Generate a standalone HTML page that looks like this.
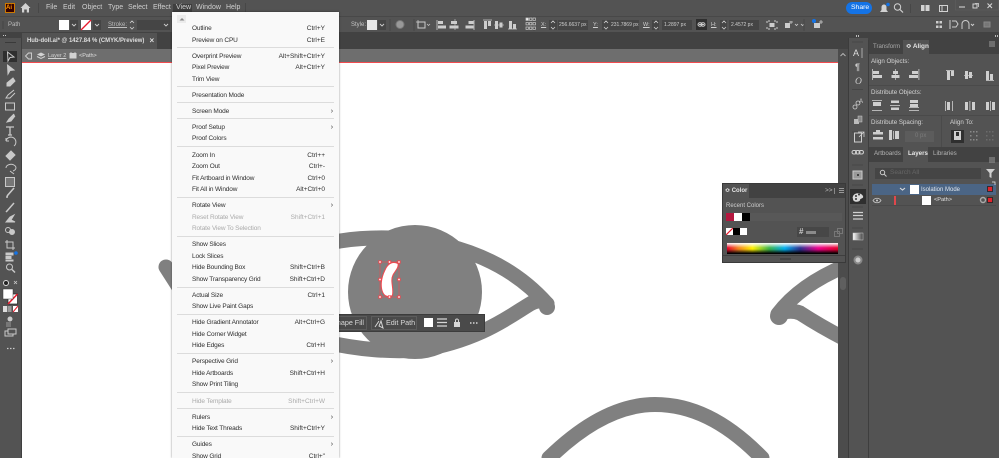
<!DOCTYPE html>
<html><head><meta charset="utf-8"><title>Illustrator View menu</title>
<style>
html,body{margin:0;padding:0;background:#535353}
body{position:relative;width:999px;height:458px;overflow:hidden;font-family:"Liberation Sans",sans-serif}
div,span,svg{position:absolute}
.t{white-space:nowrap;line-height:12px;height:12px;font-size:6.6px;color:#cfcfcf}
#menu{left:172px;top:12px;width:167px;height:446px;background:#f9f9f9;box-shadow:0 0 2px rgba(0,0,0,.45);overflow:hidden}
.m{left:20px;margin-top:1px;white-space:nowrap;font-size:6.5px;letter-spacing:-.14px;line-height:12px;height:12px;color:#2e2e2e;width:133px}
.m b{position:absolute;right:0;top:0;font-weight:normal;letter-spacing:0}
.m i{position:absolute;right:-8px;top:0;font-style:normal;font-size:7px}
.m.d{color:#aaa}
.s{left:5px;width:157px;height:1px;background:#dcdcdc}
.f{background:#454545}
</style></head><body>

<!-- bars -->
<div style="left:0;top:0;width:999px;height:16px;background:#535353"></div>
<div style="left:0;top:16px;width:999px;height:17px;background:#535353;border-top:1px solid #484848;box-sizing:border-box;border-bottom:1px solid #424242"></div>
<div style="left:0;top:33px;width:848px;height:16px;background:#424242"></div>
<div style="left:22px;top:33px;width:135px;height:16px;background:#535353"></div>
<div style="left:22px;top:49px;width:826px;height:13px;background:#6e6e6e"></div>
<div style="left:22px;top:62px;width:816px;height:1.5px;background:#f14b4f"></div>

<!-- canvas -->
<div style="left:22px;top:63px;width:816px;height:395px;background:#fff"></div>
<svg style="left:0;top:0" width="999" height="458" fill="none" stroke="#808080" stroke-width="15" stroke-linecap="round" stroke-linejoin="round">
<path d="M166 267L182 292"/>
<path d="M300 246Q320 243 340 241C400 232 490 240 547 304"/>
<path d="M547 304Q540 298 530 304C510 316 480 340 420 350C390 352 360 350 320 341"/>
<circle cx="415" cy="292" r="67" fill="#808080" stroke="none"/>
<path d="M845 266Q800 285 778 314Q790 309 800 313Q820 326 845 339"/>
<circle cx="547" cy="307" r="8" fill="#808080" stroke="none"/>
<circle cx="779" cy="316" r="9" fill="#808080" stroke="none"/>
<path d="M549 458C590 418 625 404.500 655 404.500C690 404.500 725 420 762 458"/>
</svg>

<!-- selected shape -->
<svg style="left:0;top:0" width="999" height="458">
<path d="M398 263.500C393 261 388 263 385 270C381 278 380 287 383 293C385 297 391 298 392.500 295C394 288 390 281 393 275C395 271 399 268 398 263.500Z" fill="#fff" stroke="#f0484f" stroke-width="1"/>
<rect x="380" y="262" width="19" height="35" fill="none" stroke="#f0484f" stroke-width=".6"/>
<g fill="#fff" stroke="#f0484f" stroke-width=".9">
<rect x="378.800" y="260.800" width="2.400" height="2.400"/><rect x="388.300" y="260.800" width="2.400" height="2.400"/><rect x="397.800" y="260.800" width="2.400" height="2.400"/>
<rect x="378.800" y="278.300" width="2.400" height="2.400"/><rect x="397.800" y="278.300" width="2.400" height="2.400"/>
<rect x="378.800" y="295.800" width="2.400" height="2.400"/><rect x="388.300" y="295.800" width="2.400" height="2.400"/><rect x="397.800" y="295.800" width="2.400" height="2.400"/>
</g></svg>

<!-- contextual bar -->
<div style="left:330px;top:314px;width:155px;height:18px;background:#4a4a4a;border:1px solid #3c3c3c;box-sizing:border-box"></div>
<div style="left:330px;top:316px;width:37px;height:14px;border:1px solid #5c5c5c;box-sizing:border-box"></div>
<div style="left:371px;top:316px;width:46px;height:14px;border:1px solid #5c5c5c;box-sizing:border-box"></div>
<span class="t" style="left:339px;top:317px;width:25px;overflow:hidden;direction:rtl;font-size:7.200px;color:#d8d8d8">Shape Fill</span>
<span class="t" style="left:386px;top:317px;font-size:7.200px;color:#d8d8d8">Edit Path</span>
<div style="left:424px;top:318px;width:9px;height:9px;background:#fff"></div>
<svg style="left:0;top:0" width="999" height="458" fill="none" stroke="#d6d6d6">
<path d="M375 327L379 321M381 321L383 328L379 326Z M378 319h1M382 319h1" stroke-width="1"/>
<path d="M437 319h10M437 322.500h10M437 326h10" stroke-width="1.300"/>
<path d="M455.500 322v-1.500a1.500 1.500 0 0 1 3 0V322" stroke-width="1"/><rect x="454" y="322" width="6" height="5" fill="#d6d6d6" stroke="none"/>
<path d="M470 323h1.500M473 323h1.500M476 323h1.500" stroke-width="1.500"/>
</svg>

<!-- left toolbar -->
<div style="left:0;top:33px;width:21px;height:425px;background:#535353;border-right:1px solid #3f3f3f"></div>
<div style="left:0;top:33px;width:22px;height:5px;background:#424242"></div>
<div style="left:5px;top:42px;width:11px;height:1px;background:#3a3a3a"></div>
<div style="left:3px;top:51px;width:14px;height:11px;background:#2f2f2f"></div>
<svg style="left:0;top:0" width="22" height="458" fill="#c9c9c9" stroke="#c9c9c9" stroke-width="1">
<path d="M3 35.500h1M5 35.500h1" stroke-width="1"/>
<path d="M7.500 52L14 57L10 57.500L8 61Z" fill="none"/>
<path d="M7.500 65L14 70L10 70.500L8 74Z"/>
<path d="M13 78L7 83L7 86L10 86L15 81Z"/>
<path d="M14 90L8 95L6 98L10 98L15 93" fill="none"/>
<rect x="5.500" y="103" width="9" height="7" fill="none"/>
<path d="M14 114L9 119L7 122L11 121L15 116"/>
<path d="M6 127h8M10 127v8M8 135h4" fill="none" stroke-width="1.300"/>
<path d="M14 146A5 5 0 1 0 6 141L6 138M6 141L9 141" fill="none"/>
<path d="M11 151L15 155L10 160L6 156Z"/>
<path d="M6 168a5 3.500 0 1 1 7 3M10 171L14 174" fill="none"/>
<rect x="5.500" y="177.500" width="9" height="9" fill="#777"/>
<path d="M14 188L7 196M6 197L8 197" fill="none" stroke-width="1.600"/>
<path d="M14 203L7 211L6 212" fill="none" stroke-width="1.500"/>
<path d="M6 222L10 217L14 215L11 220L15 222Z"/>
<circle cx="8" cy="230" r="2.500" fill="none"/><circle cx="12" cy="232" r="2.500"/>
<path d="M7 240V248H15M5 242H13V250" fill="none"/>
<rect x="6" y="253" width="7" height="2"/><rect x="6" y="256.500" width="5" height="2"/><rect x="6" y="260" width="7" height="1"/>
<circle cx="9.500" cy="267" r="3" fill="none"/><path d="M12 269.500L15 272.500" stroke-width="1.500"/>
<path d="M14 281L17 284M14 284l3-3" stroke-width=".8"/>
<circle cx="6" cy="283" r="2.500" fill="#222" stroke="#ddd"/>
<rect x="6" y="322" width="5" height="5" fill="#777" stroke="none"/><circle cx="10" cy="319" r="2.500" stroke="none"/>
<rect x="5" y="331" width="8" height="5" fill="none"/><rect x="8" y="329" width="8" height="5" fill="#535353"/>
<path d="M7 348.500h1.500M10 348.500h1.500M13 348.500h1.500" stroke-width="1.200"/>
</svg>
<svg style="left:0;top:0" width="22" height="458">
<circle cx="16" cy="253" r="1.800" fill="#1473e6"/>
<rect x="8" y="294" width="9.500" height="10" fill="#fff" stroke="#222" stroke-width=".7"/>
<path d="M8 304L17.500 294" stroke="#e8192c" stroke-width="1.500"/>
<rect x="3" y="289" width="10" height="10" fill="#fff" stroke="#3b3b3b" stroke-width=".5"/>
<rect x="3" y="306" width="4" height="6" fill="#ddd"/><rect x="7.500" y="306" width="4" height="6" fill="#999"/>
<rect x="13" y="306" width="5" height="6" fill="#fff"/><path d="M13 312L18 306" stroke="#e8192c"/>
</svg>

<!-- menu bar -->
<div style="left:5px;top:3px;width:10px;height:10px;background:#330000;border:.7px solid #cc7a00;box-sizing:border-box"></div>
<span class="t" style="left:6px;top:2px;font-size:6px;font-weight:bold;color:#ff9a00">Ai</span>
<svg style="left:0;top:0" width="60" height="16" fill="#d2d2d2"><path d="M25.500 3L30.500 8H29V12.500H26.800V9.500H24.200V12.500H22V8H20.500Z"/><rect x="38" y="3" width="1" height="10" fill="#474747"/></svg>
<div style="left:173px;top:4px;width:19px;height:12px;background:#3f3f3f"></div>
<span class="t" style="left:46px;top:2px;font-size:7px">File</span>
<span class="t" style="left:63px;top:2px;font-size:7px">Edit</span>
<span class="t" style="left:82px;top:2px;font-size:7px">Object</span>
<span class="t" style="left:108px;top:2px;font-size:7px">Type</span>
<span class="t" style="left:128px;top:2px;font-size:7px">Select</span>
<span class="t" style="left:153px;top:2px;font-size:7px">Effect</span>
<span class="t" style="left:176px;top:2px;font-size:7px">View</span>
<span class="t" style="left:196px;top:2px;font-size:7px">Window</span>
<span class="t" style="left:226px;top:2px;font-size:7px">Help</span>
<div style="left:245px;top:3px;width:1px;height:10px;background:#474747"></div>

<!-- share / top right -->
<div style="left:846px;top:2px;width:26px;height:12px;border-radius:6px;background:#1473e6"></div>
<span class="t" style="left:851px;top:2px;font-size:6.800px;color:#fff">Share</span>
<svg style="left:870px;top:0" width="129" height="16" fill="none" stroke="#d2d2d2">
<path d="M10 12L11.500 10V7A2.500 2.500 0 0 1 16.500 7V10L18 12Z" fill="#d2d2d2" stroke="none"/>
<circle cx="18" cy="4.500" r="1.800" fill="#1473e6" stroke="none"/>
<circle cx="27.500" cy="7" r="3.200"/><path d="M30 9.500L33 12.500" stroke-width="1.200"/>
<path d="M40.500 4v9" stroke="#474747"/>
<rect x="51" y="5" width="8.500" height="6" fill="#d2d2d2" stroke="none"/><path d="M55 5v6" stroke="#535353"/>
<rect x="69.500" y="5.500" width="8" height="6"/><path d="M72 5.500v6"/>
<rect x="85.500" y="-1" width="43" height="11" stroke="#5f5f5f" stroke-width=".7"/>
<path d="M89 7h6" stroke-width="1.100"/><rect x="103" y="4" width="4" height="4"/><path d="M105 3.500h3.500v3.500" stroke-width=".8"/>
<path d="M117.500 3.500l4.500 4.500M122 3.500l-4.500 4.500" stroke-width="1.100"/>
</svg>

<!-- control bar -->
<span class="t" style="left:8px;top:19px;font-size:6px;color:#bdbdbd">Path</span>
<div style="left:59px;top:20px;width:9.500px;height:9.500px;background:#fff"></div>
<div class="f" style="left:70px;top:20px;width:8px;height:10px"></div>
<div style="left:81px;top:20px;width:10px;height:10px;background:#fff"></div>
<div class="f" style="left:93px;top:20px;width:8px;height:10px"></div>
<span class="t" style="left:108px;top:19px;font-size:6px;text-decoration:underline;color:#bdbdbd">Stroke:</span>
<div class="f" style="left:137px;top:20px;width:33px;height:10px"></div>
<span class="t" style="left:351px;top:19px;font-size:6px;color:#c4c4c4">Style:</span>
<div style="left:367px;top:20px;width:10px;height:10px;background:#e6e6e6"></div>
<div class="f" style="left:378px;top:20px;width:8px;height:10px"></div>
<span class="t" style="left:541px;top:19px;font-size:5.500px;text-decoration:underline">X:</span>
<div class="f" style="left:549px;top:20px;width:8px;height:10px"></div>
<div class="f" style="left:558px;top:20px;width:30px;height:10px"></div>
<span class="t" style="left:559px;top:19px;font-size:5px">256.6637 px</span>
<span class="t" style="left:593px;top:19px;font-size:5.500px;text-decoration:underline">Y:</span>
<div class="f" style="left:602px;top:20px;width:8px;height:10px"></div>
<div class="f" style="left:610px;top:20px;width:29px;height:10px"></div>
<span class="t" style="left:611px;top:19px;font-size:5px">231.7869 px</span>
<span class="t" style="left:643px;top:19px;font-size:5.500px;text-decoration:underline">W:</span>
<div class="f" style="left:652px;top:20px;width:7px;height:10px"></div>
<div class="f" style="left:662px;top:20px;width:30px;height:10px"></div>
<span class="t" style="left:664px;top:19px;font-size:5px">1.2897 px</span>
<div style="left:696px;top:19px;width:11px;height:11px;background:#2f2f2f"></div>
<span class="t" style="left:711px;top:19px;font-size:5.500px;text-decoration:underline">H:</span>
<div class="f" style="left:720px;top:20px;width:7px;height:10px"></div>
<div class="f" style="left:729px;top:20px;width:30px;height:10px"></div>
<span class="t" style="left:731px;top:19px;font-size:5px">2.4572 px</span>
<svg style="left:0;top:0" width="999" height="33" fill="none" stroke="#cdcdcd" stroke-width="1">
<path d="M3 21v8" stroke="#444"/>
<path d="M72 24l2 2 2-2M95 24l2 2 2-2M164 24l2 2 2-2M380 24l2 2 2-2" stroke-width=".9"/>
<path d="M81 30L91 20" stroke="#e8192c" stroke-width="1.300"/>
<path d="M130 23l2-2 2 2M130 27l2 2 2-2M551 23l2-2 2 2M551 27l2 2 2-2M604 23l2-2 2 2M604 27l2 2 2-2M654 23l2-2 2 2M654 27l2 2 2-2M722 23l2-2 2 2M722 27l2 2 2-2" stroke-width=".8"/>
<path d="M390 19v12M414 19v12M534 19v12" stroke="#474747"/>
<circle cx="400" cy="24.500" r="4" fill="#999" stroke="#777"/>
<rect x="418" y="22" width="7" height="6"/><path d="M416 22h9M418 20v8M427 24l1.500 1.500 1.500-1.500" stroke-width=".7"/>
<!-- align -->
<path d="M437 20v10M474 20v10M483 20h9M508 29h9" stroke-width=".8"/>
<g fill="#cdcdcd" stroke="none"><rect x="438" y="21" width="5" height="3"/><rect x="438" y="25.500" width="8" height="3"/><rect x="451" y="21" width="6" height="3"/><rect x="449.500" y="25.500" width="9" height="3"/><rect x="468.500" y="21" width="5" height="3"/><rect x="465.500" y="25.500" width="8" height="3"/>
<rect x="484" y="21" width="3" height="8"/><rect x="488" y="21" width="3" height="5"/><rect x="495" y="21" width="3" height="8"/><rect x="499.500" y="22.500" width="3" height="5"/><rect x="509" y="21" width="3" height="8"/><rect x="513" y="24" width="3" height="5"/></g>
<path d="M455 19v11" stroke-width=".6"/><path d="M494 25h10" stroke-width=".6"/>
<!-- ref point -->
<g stroke-width=".7"><rect x="526" y="18" width="2.400" height="2.400" fill="#eee"/><rect x="529.500" y="18" width="2.400" height="2.400"/><rect x="533" y="18" width="2.400" height="2.400"/><rect x="526" y="22.500" width="2.400" height="2.400"/><rect x="529.500" y="22.500" width="2.400" height="2.400"/><rect x="533" y="22.500" width="2.400" height="2.400"/><rect x="526" y="27" width="2.400" height="2.400"/><rect x="529.500" y="27" width="2.400" height="2.400"/><rect x="533" y="27" width="2.400" height="2.400"/></g>
<!-- link -->
<path d="M699 24.500h5" stroke-width="1"/><rect x="698" y="22.800" width="4" height="3.400" rx="1.700"/><rect x="701" y="22.800" width="4" height="3.400" rx="1.700"/>
<path d="M768 21h2M774 21h2M768 29h2M774 29h2M767 21v2M777 21v2M767 27v2M777 27v2"/><rect x="769.500" y="23" width="5" height="4" fill="#cdcdcd" stroke="none"/>
<rect x="785" y="23" width="5" height="5" fill="#cdcdcd" stroke="none"/><path d="M791 21v3M789 22h4M795 24l1.500 1.500 1.500-1.500M801 24l1.500 1.500 1.500-1.500" stroke-width=".8"/>
<path d="M804 19v12" stroke="#474747"/>
<rect x="814" y="23" width="6" height="5" fill="#cdcdcd" stroke="none"/><circle cx="814" cy="21" r="2" fill="#1473e6" stroke="none"/><path d="M821 20v4M819 22h4" stroke-width=".8"/>
<g fill="#cdcdcd" stroke="none"><rect x="936" y="21" width="2.500" height="2.500"/><rect x="939.500" y="21" width="2.500" height="2.500"/><rect x="936" y="25.500" width="2.500" height="2.500"/><rect x="939.500" y="25.500" width="2.500" height="2.500"/></g>
<path d="M950 20v9M952 21h4l2 3-2 3h-4"/><path d="M962 29v-5a3.500 3.500 0 0 1 7 0v5M971 24l1.500 1.500 1.500-1.500"/>
<rect x="984" y="22" width="6" height="5" fill="#777" stroke="#888"/>
</svg>

<!-- tab text, breadcrumb -->
<span class="t" style="left:27px;top:35px;font-size:5.930px;font-weight:bold;color:#dedede">Hub-doll.ai* @ 1427.84 % (CMYK/Preview)</span>
<span class="t" style="left:149.500px;top:35px;font-size:8px;font-weight:bold;color:#ddd">×</span>
<span class="t" style="left:48px;top:50px;font-size:5.500px;text-decoration:underline;color:#d2d2d2">Layer 2</span>
<span class="t" style="left:79px;top:50px;font-size:5.500px;color:#e0e0e0">&lt;Path&gt;</span>
<svg style="left:0;top:0" width="100" height="62" fill="none" stroke="#d2d2d2">
<path d="M31.500 53v6h-3l-3-3 3-3Z" stroke-width=".9"/>
<path d="M41 52.500l4 2-4 2-4-2Z" fill="#d2d2d2" stroke="none"/><path d="M37 56.500l4 2 4-2" stroke-width="1"/>
<rect x="69.500" y="53" width="7" height="5.500" fill="#d2d2d2" stroke="none"/><path d="M71 53v-1M75 53v-1" stroke-width=".8"/>
</svg>

<!-- scrollbar + strip + right panel -->
<div style="left:838px;top:49px;width:10px;height:409px;background:#4c4c4c"></div>
<div style="left:840px;top:277px;width:6px;height:13px;border-radius:3px;background:#5f5f5f"></div>
<svg style="left:838px;top:50px" width="10" height="10" fill="none" stroke="#bbb"><path d="M2.500 6l2.500-2.500 2.500 2.500" stroke-width=".9"/></svg>
<div style="left:848px;top:33px;width:151px;height:425px;background:#424242"></div>
<div style="left:848px;top:38px;width:20px;height:420px;background:#535353;border-left:1px solid #3c3c3c;box-sizing:border-box"></div>
<div style="left:868px;top:40px;width:131px;height:418px;background:#535353;border-left:1px solid #3e3e3e;box-sizing:border-box"></div>
<div style="left:869px;top:40px;width:130px;height:14px;background:#424242"></div>
<div style="left:903px;top:40px;width:26px;height:14px;background:#535353"></div>
<div style="left:869px;top:147px;width:130px;height:15px;background:#424242"></div>
<div style="left:903px;top:147px;width:25px;height:15px;background:#535353"></div>
<span class="t" style="left:873px;top:41px;font-size:6px;color:#aaa">Transform</span>
<span class="t" style="left:906px;top:41px;font-size:6.400px;font-weight:bold;color:#e4e4e4">≎ Align</span>
<span class="t" style="left:871px;top:56px;font-size:6.200px;color:#d4d4d4">Align Objects:</span>
<span class="t" style="left:871px;top:87px;font-size:6.200px;color:#d4d4d4">Distribute Objects:</span>
<span class="t" style="left:871px;top:117px;font-size:6.200px;color:#d4d4d4">Distribute Spacing:</span>
<span class="t" style="left:950px;top:117px;font-size:6.200px;color:#d4d4d4">Align To:</span>
<div style="left:869px;top:85px;width:130px;height:1px;background:#4a4a4a"></div>
<div style="left:869px;top:115px;width:130px;height:1px;background:#4a4a4a"></div>
<div style="left:941px;top:116px;width:1px;height:31px;background:#4a4a4a"></div>
<div style="left:905px;top:131px;width:29px;height:11px;background:#5c5c5c"></div>
<span class="t" style="left:915px;top:130px;font-size:6px;color:#7c7c7c">0 px</span>
<div style="left:951px;top:130px;width:13px;height:13px;background:#2f2f2f"></div>
<span class="t" style="left:874px;top:148px;font-size:6.200px;color:#b4b4b4">Artboards</span>
<span class="t" style="left:908px;top:148px;font-size:6.200px;font-weight:bold;color:#e6e6e6">Layers</span>
<span class="t" style="left:933px;top:148px;font-size:6.200px;color:#b4b4b4">Libraries</span>
<div style="left:875px;top:168px;width:106px;height:11px;background:#454545"></div>
<span class="t" style="left:890px;top:167px;font-size:6.500px;color:#666">Search All</span>
<div style="left:872px;top:184px;width:124px;height:10.500px;background:#4b6585"></div>
<span class="t" style="left:921px;top:183.500px;font-size:6px;color:#dfe6ee">Isolation Mode</span>
<div style="left:910px;top:184.500px;width:9px;height:9px;background:#fff"></div>
<div style="left:922px;top:196px;width:9px;height:9px;background:#fff"></div>
<div style="left:894px;top:195.500px;width:2px;height:9px;background:#e0474c"></div>
<span class="t" style="left:934px;top:194px;font-size:5.600px;color:#e2e2e2">&lt;Path&gt;</span>
<div style="left:872px;top:205px;width:124px;height:1px;background:#4a4a4a"></div>
<svg style="left:848px;top:33px" width="151" height="240" fill="none" stroke="#d0d0d0" stroke-width="1">
<!-- panel grips -->
<g fill="#bbb" stroke="none"><rect x="8" y="2" width="1" height="2"/><rect x="10" y="2" width="1" height="2"/><rect x="149" y="2" width="1" height="2"/><rect x="147" y="2" width="1" height="2"/></g>
<path d="M4 9h11M4 56.500h11M4 99h11M4 118h11M4 132h11M4 152h11M4 174h11M4 195h11M4 216h11" stroke="#474747"/>
<!-- menu icon -->
<path d="M141 9h6M141 11h6M141 13h6M141 125h6M141 127h6M141 129h6" stroke="#999"/>
<!-- strip -->
<path d="M14 15v10" stroke-width=".7"/>
<rect x="6.500" y="100" width="7" height="9"/><path d="M10 99h6v5M16 99l-5 5" stroke-width=".8"/>
<rect x="4" y="117.500" width="4.500" height="3.500" rx="1.700"/><rect x="7.500" y="117.500" width="4.500" height="3.500" rx="1.700"/><rect x="11" y="117.500" width="4.500" height="3.500" rx="1.700"/>
<rect x="5" y="138" width="9" height="8" fill="#999" stroke="#ccc"/><rect x="9" y="141" width="2" height="2" fill="#444" stroke="none"/>
<path d="M5 179.500h10M5 182.500h10M5 186h10" stroke-width="1.300"/>
<defs><linearGradient id="gg"><stop offset="0" stop-color="#fff"/><stop offset="1" stop-color="#444"/></linearGradient></defs>
<rect x="5" y="200" width="10" height="7" fill="url(#gg)" stroke="#ccc" stroke-width=".5"/>
<circle cx="10" cy="227" r="3.500" fill="#ccc" stroke="#888" stroke-width="2"/>
<circle cx="7" cy="74" r="2" stroke-width=".8"/><circle cx="10" cy="70" r="2" stroke-width=".8"/>
<rect x="6" y="86" width="5" height="5" fill="#bbb" stroke="none"/><rect x="10" y="83" width="4" height="6" fill="#888" stroke="#ccc" stroke-width=".5"/>
</svg>
<span class="t" style="left:853px;top:47px;font-size:9px;color:#ddd">A</span>
<span class="t" style="left:855px;top:61px;font-size:9px;font-weight:bold;color:#ccc">¶</span>
<span class="t" style="left:855px;top:76px;font-size:9.500px;font-family:'Liberation Serif',serif;font-style:italic;color:#ccc">O</span>
<span class="t" style="left:859px;top:96px;font-size:6px;color:#ccc">A</span>
<div style="left:850px;top:189px;width:16px;height:15px;background:#2f2f2f"></div>
<svg style="left:851px;top:190px" width="14" height="13"><path d="M2 9a5 4 0 0 1 10-3c1 3-3 2-3 4s-7 3-7-1Z" fill="#d8d8d8"/><circle cx="5" cy="6" r="1" fill="#333"/><circle cx="8" cy="4.500" r="1" fill="#333"/><circle cx="5" cy="9" r="1" fill="#333"/></svg>

<!-- align panel icons -->
<svg style="left:868px;top:60px" width="131" height="145" fill="#cfcfcf" stroke="none">
<g><rect x="5" y="11" width="6" height="3"/><rect x="5" y="15" width="9" height="3"/><rect x="4" y="9" width=".8" height="11"/>
<rect x="25" y="11" width="5" height="3"/><rect x="23.500" y="15" width="8" height="3"/><rect x="27" y="9" width=".7" height="11"/>
<rect x="44" y="11" width="6" height="3"/><rect x="41" y="15" width="9" height="3"/><rect x="50.500" y="9" width=".8" height="11"/>
<rect x="78" y="10" width="8" height=".8"/><rect x="79" y="11" width="3" height="9"/><rect x="83" y="11" width="3" height="5"/>
<rect x="97" y="11" width="3" height="8"/><rect x="101" y="12" width="3" height="6"/><rect x="96" y="15" width="9" height=".7"/>
<rect x="118" y="20" width="8" height=".8"/><rect x="118" y="11" width="3" height="9"/><rect x="122" y="14" width="3" height="6"/></g>
<g fill="#cfcfcf"><rect x="4" y="40" width="10" height=".8"/><rect x="5" y="42" width="8" height="4"/><rect x="4" y="50" width="10" height=".8"/>
<rect x="23" y="40.500" width="8" height="2.500"/><rect x="22" y="45" width="10" height=".8"/><rect x="23" y="47.500" width="8" height="2.500"/>
<rect x="42" y="40" width="8" height="3"/><rect x="41" y="47" width="10" height=".8"/><rect x="42" y="44" width="8" height="3"/><rect x="41" y="50" width="10" height=".8"/>
<rect x="77" y="41" width=".8" height="10"/><rect x="79" y="42" width="3" height="8"/><rect x="84" y="41" width=".8" height="10"/>
<rect x="97" y="42" width="3" height="8"/><rect x="101.500" y="41" width=".8" height="10"/><rect x="104" y="42" width="3" height="8"/>
<rect x="118" y="42" width="3" height="8"/><rect x="122" y="41" width=".8" height="10"/><rect x="124" y="42" width="3" height="8"/>
<rect x="5" y="72" width="10" height="2.500"/><rect x="8" y="70" width="4" height="2"/><rect x="5" y="77" width="10" height="2.500"/>
<rect x="21" y="70" width="3" height="10"/><rect x="25" y="71" width=".8" height="8"/><rect x="27" y="71" width="4" height="8"/>
<rect x="86" y="71" width="7" height="9"/><rect x="88" y="72" width="3" height="4" fill="#2f2f2f"/></g>
<g fill="#8a8a8a"><rect x="102" y="71" width="1.500" height="1.500"/><rect x="105" y="71" width="1.500" height="1.500"/><rect x="108" y="71" width="1.500" height="1.500"/><rect x="102" y="75" width="1.500" height="1.500"/><rect x="108" y="75" width="1.500" height="1.500"/><rect x="102" y="79" width="1.500" height="1.500"/><rect x="105" y="79" width="1.500" height="1.500"/><rect x="108" y="79" width="1.500" height="1.500"/></g>
<g fill="#6b6b6b"><rect x="118" y="71" width="1.500" height="1.500"/><rect x="121" y="71" width="1.500" height="1.500"/><rect x="124" y="71" width="1.500" height="1.500"/><rect x="118" y="75" width="1.500" height="1.500"/><rect x="124" y="75" width="1.500" height="1.500"/><rect x="118" y="79" width="1.500" height="1.500"/><rect x="121" y="79" width="1.500" height="1.500"/><rect x="124" y="79" width="1.500" height="1.500"/></g>
<!-- search/funnel etc. -->
<circle cx="14.500" cy="112.500" r="2.200" fill="none" stroke="#ccc"/><path d="M16 114l2.500 2.500" stroke="#ccc"/>
<path d="M118 109h9l-3.500 4v5l-2 -1v-4Z"/>
<path d="M32 128l2.500 2 2.500-2" fill="none" stroke="#ddd" stroke-width="1.100"/>
<path d="M124 122h3v3" fill="none" stroke="#eee" stroke-width=".7"/>
<path d="M5 140.500c2-3 6-3 8 0c-2 3-6 3-8 0Z" fill="none" stroke="#ccc" stroke-width=".8"/><circle cx="9" cy="140.500" r="1"/>
<rect x="119.500" y="126.500" width="5" height="5" fill="#e0242d" stroke="#222" stroke-width=".8"/>
<circle cx="115" cy="140" r="2.500" fill="none" stroke="#aaa" stroke-width="1.400"/>
<rect x="119.500" y="137.500" width="5" height="5" fill="#e0242d" stroke="#222" stroke-width=".8"/>
</svg>

<!-- color panel -->
<div style="left:722px;top:183px;width:124px;height:80px;background:#535353;border:1px solid #3a3a3a;box-sizing:border-box"></div>
<div style="left:723px;top:184px;width:122px;height:14px;background:#424242"></div>
<div style="left:723px;top:184px;width:26px;height:14px;background:#535353"></div>
<span class="t" style="left:725px;top:185px;font-size:6px;font-weight:bold;color:#e6e6e6">≎ Color</span>
<span class="t" style="left:825px;top:185px;font-size:6.500px;color:#bbb">&gt;&gt;</span>
<div style="left:834px;top:188px;width:1px;height:6px;background:#888"></div>
<svg style="left:838px;top:187px" width="7" height="8" stroke="#999"><path d="M1 1.500h5M1 3.500h5M1 5.500h5"/></svg>
<span class="t" style="left:726px;top:200px;font-size:6px;color:#cdcdcd">Recent Colors</span>
<div style="left:726px;top:213px;width:116px;height:8px;background:#585858"></div>
<div style="left:726px;top:213px;width:8px;height:8px;background:#b5173f"></div>
<div style="left:734px;top:213px;width:8px;height:8px;background:#fff"></div>
<div style="left:742px;top:213px;width:8px;height:8px;background:#000"></div>
<svg style="left:726px;top:228px" width="8" height="7"><rect width="7" height="7" fill="#fff"/><path d="M0 7L7 0" stroke="#e8192c" stroke-width="1.200"/></svg>
<div style="left:733px;top:228px;width:6.500px;height:7px;background:#000"></div>
<div style="left:740px;top:228px;width:6.500px;height:7px;background:#fff"></div>
<div style="left:797px;top:227px;width:32px;height:10px;background:#474747"></div>
<span class="t" style="left:799px;top:226px;font-size:8px;font-weight:bold;color:#ccc">#</span>
<div style="left:806px;top:231px;width:10px;height:3px;background:#8b8b8b"></div>
<svg style="left:834px;top:228px" width="10" height="10" fill="none" stroke="#777"><rect x=".5" y="3.500" width="5" height="5"/><rect x="3.500" y=".5" width="5" height="5"/></svg>
<div style="left:727px;top:243px;width:111px;height:11px;background:linear-gradient(to right,#e6002a,#f58220 10%,#fff200 23%,#3cb54a 38%,#00aeef 52%,#2e3192 66%,#ec008c 82%,#e6002a)"></div>
<div style="left:727px;top:243px;width:111px;height:11px;background:linear-gradient(to bottom,#fff,rgba(255,255,255,0) 45%,rgba(0,0,0,0) 55%,#000 95%)"></div>
<div style="left:723px;top:255px;width:122px;height:1px;background:#3f3f3f"></div>
<div style="left:780px;top:258px;width:11px;height:2px;background:#444"></div>

<!-- view menu -->
<div id="menu">
<div style="left:5px;top:3px;width:9px;height:8px;background:#ececec"></div>
<svg style="left:6px;top:4px" width="8" height="6"><path d="M1.500 4.500L4 2L6.500 4.500Z" fill="#888"/></svg>
<div class="m" style="top:10px">Outline<b>Ctrl+Y</b></div>
<div class="m" style="top:21.500px">Preview on CPU<b>Ctrl+E</b></div>
<div class="s" style="top:35px"></div>
<div class="m" style="top:37.500px">Overprint Preview<b>Alt+Shift+Ctrl+Y</b></div>
<div class="m" style="top:49px">Pixel Preview<b>Alt+Ctrl+Y</b></div>
<div class="m" style="top:60.500px">Trim View</div>
<div class="s" style="top:74px"></div>
<div class="m" style="top:76.500px">Presentation Mode</div>
<div class="s" style="top:90px"></div>
<div class="m" style="top:92.500px">Screen Mode<i>›</i></div>
<div class="s" style="top:106px"></div>
<div class="m" style="top:109px">Proof Setup<i>›</i></div>
<div class="m" style="top:120px">Proof Colors</div>
<div class="s" style="top:134px"></div>
<div class="m" style="top:136.500px">Zoom In<b>Ctrl++</b></div>
<div class="m" style="top:148px">Zoom Out<b>Ctrl+-</b></div>
<div class="m" style="top:159.500px">Fit Artboard in Window<b>Ctrl+0</b></div>
<div class="m" style="top:171px">Fit All in Window<b>Alt+Ctrl+0</b></div>
<div class="s" style="top:185px"></div>
<div class="m" style="top:187px">Rotate View<i>›</i></div>
<div class="m d" style="top:198.500px">Reset Rotate View<b>Shift+Ctrl+1</b></div>
<div class="m d" style="top:210px">Rotate View To Selection</div>
<div class="s" style="top:224px"></div>
<div class="m" style="top:226px">Show Slices</div>
<div class="m" style="top:237.500px">Lock Slices</div>
<div class="m" style="top:249px">Hide Bounding Box<b>Shift+Ctrl+B</b></div>
<div class="m" style="top:260.500px">Show Transparency Grid<b>Shift+Ctrl+D</b></div>
<div class="s" style="top:275px"></div>
<div class="m" style="top:276.500px">Actual Size<b>Ctrl+1</b></div>
<div class="m" style="top:288px">Show Live Paint Gaps</div>
<div class="s" style="top:302px"></div>
<div class="m" style="top:304px">Hide Gradient Annotator<b>Alt+Ctrl+G</b></div>
<div class="m" style="top:315.500px">Hide Corner Widget</div>
<div class="m" style="top:327px">Hide Edges<b>Ctrl+H</b></div>
<div class="s" style="top:341px"></div>
<div class="m" style="top:343px">Perspective Grid<i>›</i></div>
<div class="m" style="top:354.500px">Hide Artboards<b>Shift+Ctrl+H</b></div>
<div class="m" style="top:366px">Show Print Tiling</div>
<div class="s" style="top:380px"></div>
<div class="m d" style="top:382.500px">Hide Template<b>Shift+Ctrl+W</b></div>
<div class="s" style="top:396px"></div>
<div class="m" style="top:398.500px">Rulers<i>›</i></div>
<div class="m" style="top:410px">Hide Text Threads<b>Shift+Ctrl+Y</b></div>
<div class="s" style="top:424px"></div>
<div class="m" style="top:426px">Guides<i>›</i></div>
<div class="m" style="top:437.500px">Show Grid<b>Ctrl+"</b></div>
</div>
</body></html>
